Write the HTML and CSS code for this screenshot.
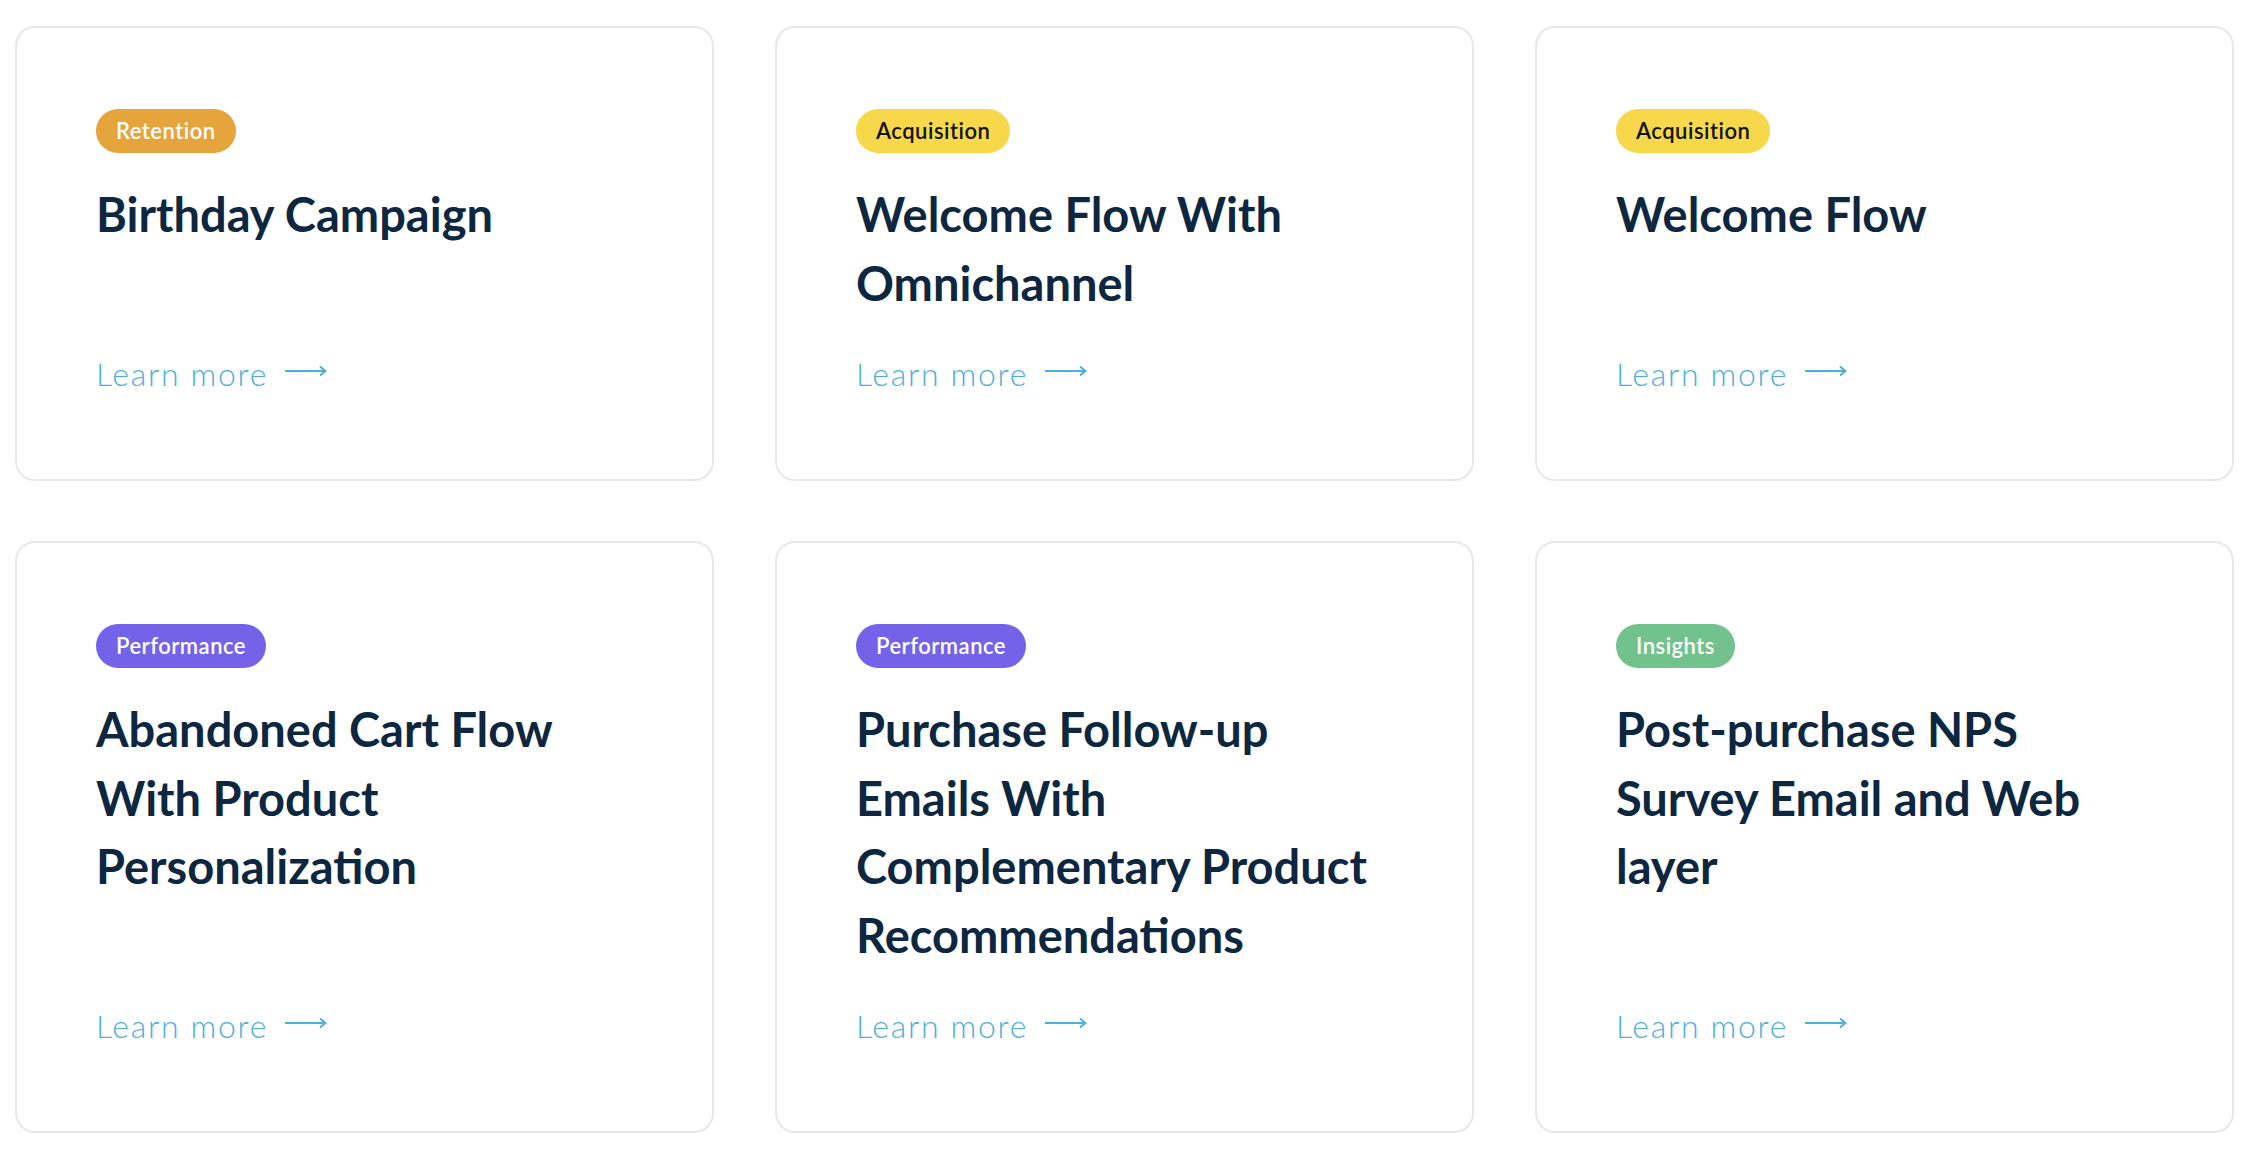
FILE: index.html
```html
<!DOCTYPE html>
<html lang="en">
<head>
<meta charset="utf-8">
<title>Use cases</title>
<link rel="stylesheet" href="styles.css">
</head>
<body>
<main class="grid">
  <article class="card">
    <span class="tag tag-retention">Retention</span>
    <h2 class="title">Birthday Campaign</h2>
    <a class="more" href="#">Learn more <svg class="arrow" viewBox="0 0 42 12" width="42" height="12"><path d="M0 6H40M35 1.5L40.5 6L35 10.5" fill="none" stroke="currentColor" stroke-width="2"/></svg></a>
  </article>
  <article class="card">
    <span class="tag tag-acquisition">Acquisition</span>
    <h2 class="title">Welcome Flow With Omnichannel</h2>
    <a class="more" href="#">Learn more <svg class="arrow" viewBox="0 0 42 12" width="42" height="12"><path d="M0 6H40M35 1.5L40.5 6L35 10.5" fill="none" stroke="currentColor" stroke-width="2"/></svg></a>
  </article>
  <article class="card">
    <span class="tag tag-acquisition">Acquisition</span>
    <h2 class="title">Welcome Flow</h2>
    <a class="more" href="#">Learn more <svg class="arrow" viewBox="0 0 42 12" width="42" height="12"><path d="M0 6H40M35 1.5L40.5 6L35 10.5" fill="none" stroke="currentColor" stroke-width="2"/></svg></a>
  </article>
  <article class="card">
    <span class="tag tag-performance">Performance</span>
    <h2 class="title">Abandoned Cart Flow With Product Personalization</h2>
    <a class="more" href="#">Learn more <svg class="arrow" viewBox="0 0 42 12" width="42" height="12"><path d="M0 6H40M35 1.5L40.5 6L35 10.5" fill="none" stroke="currentColor" stroke-width="2"/></svg></a>
  </article>
  <article class="card">
    <span class="tag tag-performance">Performance</span>
    <h2 class="title">Purchase Follow-up Emails With Complementary Product Recommendations</h2>
    <a class="more" href="#">Learn more <svg class="arrow" viewBox="0 0 42 12" width="42" height="12"><path d="M0 6H40M35 1.5L40.5 6L35 10.5" fill="none" stroke="currentColor" stroke-width="2"/></svg></a>
  </article>
  <article class="card">
    <span class="tag tag-insights">Insights</span>
    <h2 class="title">Post-purchase NPS Survey Email and Web layer</h2>
    <a class="more" href="#">Learn more <svg class="arrow" viewBox="0 0 42 12" width="42" height="12"><path d="M0 6H40M35 1.5L40.5 6L35 10.5" fill="none" stroke="currentColor" stroke-width="2"/></svg></a>
  </article>
</main>
</body>
</html>
```
FILE: styles.css
```css
* { box-sizing: border-box; }

html, body {
  margin: 0;
  background: #ffffff;
}

body {
  font-family: "Lato", "Noto Sans", sans-serif;
  color: #0d2740;
}

.grid {
  display: grid;
  grid-template-columns: repeat(3, 699px);
  column-gap: 61px;
  row-gap: 60px;
  padding: 26px 0 0 15px;
}

.card {
  display: flex;
  flex-direction: column;
  align-items: flex-start;
  border: 2px solid #e6e8eb;
  border-radius: 20px;
  padding: 81px 79px 86px 79px;
  background: #fff;
}

.tag {
  display: inline-flex;
  align-items: center;
  height: 44px;
  padding: 0 20px;
  border-radius: 22px;
  font-size: 22px;
  font-weight: 600;
  letter-spacing: 0.5px;
  color: #fff;
  line-height: 1;
}

.tag-retention { background: #e6a43c; }
.tag-acquisition { background: #f7d84a; color: #111; }
.tag-performance { background: #7463e8; }
.tag-insights { background: #72c28d; }

.title {
  margin: 27px 0 0;
  font-size: 47px;
  line-height: 68.5px;
  font-weight: 700;
  color: #0d2740;
  max-width: 540px;
}

.more {
  margin-top: auto;
  padding-top: 38px;
  display: inline-flex;
  align-items: center;
  gap: 17px;
  font-size: 32px;
  font-weight: 300;
  letter-spacing: 1.7px;
  color: #4cafdd;
  text-decoration: none;
  line-height: 38px;
}

.arrow {
  display: block;
  margin-top: -6px;
}
```
